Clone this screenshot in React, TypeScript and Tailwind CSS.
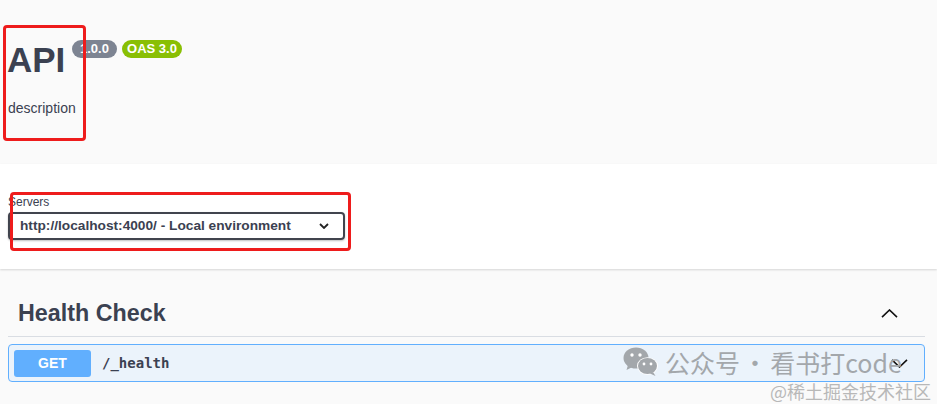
const sans = "font-['Liberation_Sans',Arial,sans-serif]";

function WeChatIcon() {
  return (
    <svg width="36" height="30" viewBox="0 0 36 30">
      <ellipse cx="13" cy="11" rx="12.5" ry="10.5" fill="#a3a7ab" />
      <path d="M5 18 L3.5 23 L9.5 20 Z" fill="#a3a7ab" />
      <circle cx="9" cy="8" r="1.7" fill="#fff" />
      <circle cx="17" cy="8" r="1.7" fill="#fff" />
      <ellipse cx="24.5" cy="19" rx="10.5" ry="8.8" fill="#fff" />
      <ellipse cx="24.5" cy="19" rx="9.5" ry="8" fill="#a3a7ab" />
      <path d="M30 25 L32.5 29 L27 26.5 Z" fill="#a3a7ab" />
      <circle cx="21" cy="17" r="1.4" fill="#fff" />
      <circle cx="28" cy="17" r="1.4" fill="#fff" />
    </svg>
  );
}

export default function App() {
  return (
    <div className={`relative w-full h-[404px] overflow-hidden bg-[#fafafa] text-[#3b4151] ${sans}`}>

      {/* ===== INFO ===== */}
      <div className="h-[164px] pl-[7px] pr-2 pt-[39px]">
        <div className="flex items-start">
          <h2 className="w-[65px] text-[35px] leading-[42px] font-bold">API</h2>
          <div className="flex gap-[5px] mt-[1px]">
            <span className="w-[45px] h-[18px] rounded-full bg-[#7d8492] text-white text-[13px] leading-[18px] font-bold text-center">1.0.0</span>
            <span className="w-[60px] h-[18px] rounded-full bg-[#89bf04] text-white text-[13px] leading-[18px] font-bold text-center">OAS 3.0</span>
          </div>
        </div>
        <p className="mt-[19px] pl-[1px] text-[14px] leading-[16px]">description</p>
      </div>

      {/* ===== SERVERS ===== */}
      <div className="h-[105px] bg-white shadow-[0_1px_2px_0_rgba(0,0,0,0.15)] px-2 pt-[32px]">
        <div className="text-[12px] leading-[13px]">Servers</div>
        <div className="mt-[3px] w-[337px] h-[28px] border-2 border-[#41444e] rounded-[4px] shadow-[0_1px_2px_0_rgba(0,0,0,0.25)] flex items-center pl-[10px] pr-[14px]">
          <span className="text-[13.7px] font-bold flex-1">http://localhost:4000/ - Local environment</span>
          <svg width="10" height="6" viewBox="0 0 10 6">
            <path d="M1 1 L5 5 L9 1" fill="none" stroke="#222" strokeWidth="1.8" />
          </svg>
        </div>
      </div>

      {/* ===== TAG ===== */}
      <div className="ml-2 w-[917px]">
        <div className="flex items-center justify-between border-b border-[#d9dde3] pl-[10px] pr-[27px] pt-[31px] pb-[9px]">
          <h3 className="text-[23.3px] leading-[27px] font-bold">Health Check</h3>
          <svg width="17" height="9" viewBox="0 0 17 9">
            <path d="M1 8.2 L8.5 1 L16 8.2" fill="none" stroke="#111" strokeWidth="1.6" />
          </svg>
        </div>
        <div className="mt-[7px] h-[38px] bg-[#ebf3fb] border border-[#61affe] rounded-[4px] flex items-center px-[5px]">
          <span className="w-[77px] h-[27px] rounded-[3px] bg-[#61affe] text-white text-[14px] font-bold flex items-center justify-center">GET</span>
          <span className="ml-[11px] font-['DejaVu_Sans_Mono',monospace] text-[14px] font-bold">/_health</span>
          <svg className="ml-auto mr-[11px]" width="17" height="9" viewBox="0 0 17 9">
            <path d="M1 0.8 L8.5 8 L16 0.8" fill="none" stroke="#111" strokeWidth="1.6" />
          </svg>
        </div>
      </div>

      {/* ===== ANNOTATION BOXES ===== */}
      <div className="absolute left-[3px] top-[25px] w-[83px] h-[116px] border-[3px] border-[#ee1c1c] rounded-[4px]"></div>
      <div className="absolute left-[10px] top-[192px] w-[341px] h-[59px] border-[3px] border-[#ee1c1c] rounded-[4px]"></div>

      {/* ===== WATERMARK ===== */}
      <div className="absolute left-[623px] top-[347px] flex items-center gap-[6px] text-[#a3a7ab] text-[25px] leading-[30px] font-['Noto_Sans_CJK_SC','Noto_Sans',sans-serif]">
        <WeChatIcon />
        <span>公众号<span className="mx-[-3px]"> · </span>看书打code</span>
      </div>
      <div className="absolute left-[770px] top-[380px] text-[#b8b8b8] text-[18px] leading-[22px] font-['Noto_Sans_CJK_SC','Noto_Sans',sans-serif]">
        @稀土掘金技术社区
      </div>
    </div>
  );
}
